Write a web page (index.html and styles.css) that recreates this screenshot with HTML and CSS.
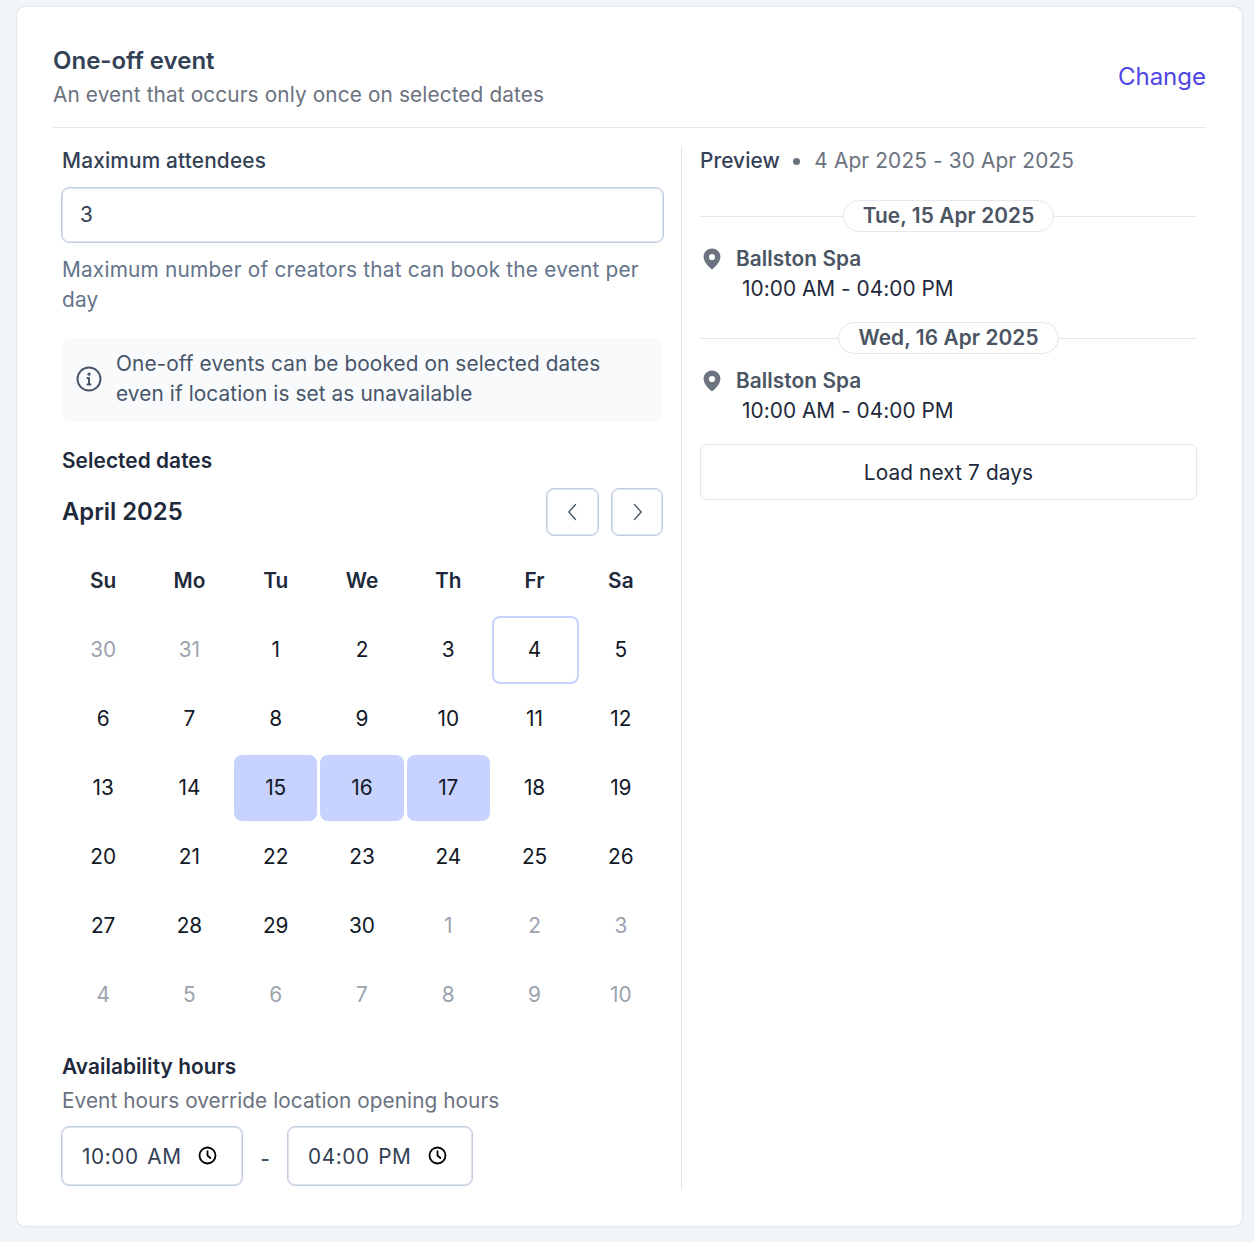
FILE: index.html
```html
<!DOCTYPE html>
<html lang="en">
<head>
<meta charset="utf-8">
<title>One-off event</title>
<link rel="stylesheet" href="styles.css">
</head>
<body>
<main class="card">
  <header class="head">
    <div>
      <h1 class="title">One-off event</h1>
      <p class="subtitle">An event that occurs only once on selected dates</p>
    </div>
    <a class="change">Change</a>
  </header>
  <div class="columns">
    <section class="left">
      <label class="label">Maximum attendees</label>
      <div class="input">3</div>
      <p class="hint">Maximum number of creators that can book the event per day</p>
      <div class="notice">
        <svg class="notice-icon" viewBox="0 0 24 24" fill="none" stroke="#475569" stroke-width="1.8" stroke-linecap="round"><circle cx="12" cy="12" r="10.6"/><path d="M12 11v6M10.6 11H12M10.6 17h2.8"/><circle cx="12" cy="7.6" r=".6" fill="#475569"/></svg>
        <p>One-off events can be booked on selected dates even if location is set as unavailable</p>
      </div>
      <h2 class="section-title">Selected dates</h2>
      <div class="month-row">
        <h3 class="month">April 2025</h3>
        <div class="nav">
          <button class="nav-btn nav-prev"><svg viewBox="0 0 24 24" fill="none" stroke="#475569" stroke-width="1.6" stroke-linecap="round" stroke-linejoin="round"><path d="M15 3l-8 9 8 9"/></svg></button>
          <button class="nav-btn nav-next"><svg viewBox="0 0 24 24" fill="none" stroke="#475569" stroke-width="1.6" stroke-linecap="round" stroke-linejoin="round"><path d="M9 3l8 9-8 9"/></svg></button>
        </div>
      </div>
      <div class="calendar">
        <div class="dow">Su</div><div class="dow">Mo</div><div class="dow">Tu</div><div class="dow">We</div><div class="dow">Th</div><div class="dow">Fr</div><div class="dow">Sa</div>
        <div class="day muted">30</div><div class="day muted">31</div><div class="day">1</div><div class="day">2</div><div class="day">3</div><div class="day today">4</div><div class="day">5</div>
        <div class="day">6</div><div class="day">7</div><div class="day">8</div><div class="day">9</div><div class="day">10</div><div class="day">11</div><div class="day">12</div>
        <div class="day">13</div><div class="day">14</div><div class="day sel">15</div><div class="day sel">16</div><div class="day sel">17</div><div class="day">18</div><div class="day">19</div>
        <div class="day">20</div><div class="day">21</div><div class="day">22</div><div class="day">23</div><div class="day">24</div><div class="day">25</div><div class="day">26</div>
        <div class="day">27</div><div class="day">28</div><div class="day">29</div><div class="day">30</div><div class="day muted">1</div><div class="day muted">2</div><div class="day muted">3</div>
        <div class="day muted">4</div><div class="day muted">5</div><div class="day muted">6</div><div class="day muted">7</div><div class="day muted">8</div><div class="day muted">9</div><div class="day muted">10</div>
      </div>
      <h2 class="section-title hours-title">Availability hours</h2>
      <p class="hours-sub">Event hours override location opening hours</p>
      <div class="times">
        <div class="time time-a"><span>10:00 AM</span><svg class="clock" viewBox="0 0 20 20" fill="none" stroke="#000" stroke-width="1.9" stroke-linecap="round" stroke-linejoin="round"><circle cx="10" cy="10" r="8.4"/><path d="M10 5.500V10l3 2.600"/></svg></div>
        <span class="dash">-</span>
        <div class="time time-b"><span>04:00 PM</span><svg class="clock" viewBox="0 0 20 20" fill="none" stroke="#000" stroke-width="1.9" stroke-linecap="round" stroke-linejoin="round"><circle cx="10" cy="10" r="8.4"/><path d="M10 5.500V10l3 2.600"/></svg></div>
      </div>
    </section>
    <aside class="right">
      <div class="preview-head"><span class="preview">Preview</span><i class="dot"></i><span class="range">4 Apr 2025 - 30 Apr 2025</span></div>
      <div class="date-sep date-first"><span>Tue, 15 Apr 2025</span></div>
      <div class="loc"><svg class="pin" viewBox="0 0 18 22"><path fill-rule="evenodd" fill="#6b7280" d="M9 .5C4.3.5.6 4.2.6 8.8c0 5 4.6 9.7 8.4 12.7 3.800-3 8.400-7.700 8.400-12.700C17.400 4.200 13.700.5 9 .5zm0 5.400a3.100 3.100 0 1 1 0 6.200 3.100 3.100 0 0 1 0-6.200z"/></svg><span>Ballston Spa</span></div>
      <div class="when">10:00 AM - 04:00 PM</div>
      <div class="date-sep"><span>Wed, 16 Apr 2025</span></div>
      <div class="loc"><svg class="pin" viewBox="0 0 18 22"><path fill-rule="evenodd" fill="#6b7280" d="M9 .5C4.3.5.6 4.2.6 8.8c0 5 4.6 9.7 8.4 12.7 3.800-3 8.400-7.700 8.400-12.700C17.400 4.200 13.700.5 9 .5zm0 5.400a3.100 3.100 0 1 1 0 6.200 3.100 3.100 0 0 1 0-6.200z"/></svg><span>Ballston Spa</span></div>
      <div class="when">10:00 AM - 04:00 PM</div>
      <button class="load">Load next 7 days</button>
    </aside>
  </div>
</main>
</body>
</html>
```
FILE: styles.css
```css
* { box-sizing: border-box; }
html, body { margin: 0; padding: 0; }
body {
  background: #f1f5f9;
  padding: 7px 12px 15px 17px;
  font-family: Inter, "Liberation Sans", sans-serif;
  color: #1e293b;
}
h1, h2, h3, p { margin: 0; }
.card {
  background: #fff;
  border-radius: 8px;
  box-shadow: 0 0 2px rgba(15, 23, 42, .22);
  padding: 36px 36px 36px;
  height: 1219px;
}
.head {
  display: flex;
  justify-content: space-between;
  align-items: center;
  height: 85px;
  padding-bottom: 15px;
  border-bottom: 1px solid #e5e7eb;
}
.title { font-size: 24px; line-height: 35px; font-weight: 600; color: #334155; margin-top: -2px; }
.subtitle { font-size: 20.8px; line-height: 31px; color: #6b7280; letter-spacing: .12px; margin-top: 1px; }
.change { font-size: 24px; line-height: 35px; color: #4f46e5; margin-bottom: 2px; }
.columns { display: flex; margin-top: 18px; height: 1044px; }
.left { width: 629px; padding: 0 18px 0 9px; border-right: 1px solid #e5e7eb; }
.right { flex: 1; padding-left: 18px; padding-right: 9px; }
.label { display: block; font-size: 20.8px; line-height: 30px; font-weight: 500; color: #334155; letter-spacing: .18px; }
.input {
  margin: 11px -1px 0;
  height: 56px;
  border: 1px solid #c2cddd;
  box-shadow: inset 0 0 0 1px #dde4ee;
  border-radius: 8px;
  padding: 0 18px 2px;
  display: flex;
  align-items: center;
  font-size: 20.8px;
  color: #334155;
}
.hint { margin-top: 12px; font-size: 20.8px; line-height: 30px; color: #64748b; letter-spacing: .2px; }
.notice {
  margin-top: 23px;
  display: flex;
  align-items: center;
  gap: 14px;
  background: #f8fafc;
  border-radius: 10px;
  padding: 11px 50px 13px 14px;
  height: 84px;
  font-size: 20.8px;
  line-height: 30px;
  color: #475569;
  letter-spacing: .1px;
}
.notice-icon { width: 26px; height: 26px; flex: none; }
.section-title { font-size: 20.8px; line-height: 31px; font-weight: 600; color: #1e293b; letter-spacing: .08px; }
.notice + .section-title { margin-top: 23px; }
.month-row { display: flex; justify-content: space-between; align-items: center; margin-top: 12px; }
.month { font-size: 23.8px; line-height: 48px; font-weight: 600; color: #1e293b; }
.nav { display: flex; gap: 12px; }
.nav-btn {
  height: 48px;
  border: 1px solid #c2cddd;
  box-shadow: inset 0 0 0 1px #dde4ee;
  border-radius: 8px;
  background: #fff;
  padding: 0;
  display: flex;
  align-items: center;
  justify-content: center;
}
.nav-prev { width: 53px; }
.nav-next { width: 52px; }
.nav-btn svg { width: 20px; height: 20px; }
.calendar {
  display: grid;
  grid-template-columns: repeat(7, 1fr);
  grid-auto-rows: 69px;
  margin: 10px -1px 0 -2px;
}
.dow {
  display: flex;
  align-items: center;
  justify-content: center;
  font-size: 20.8px;
  font-weight: 600;
  color: #1e293b;
}
.day {
  display: flex;
  align-items: center;
  justify-content: center;
  margin: 1px 0 2px;
  font-size: 20.8px;
  color: #111827;
  border-radius: 8px;
}
.day.muted { color: #9ca3af; }
.today { border: 2px solid #c7d2fe; margin: 1px -1px 0 1px; padding: 0 2px 2px 0; }
.sel { background: #c7d2fe; margin: 2px 1.5px 1px; padding-bottom: 2px; }
.hours-title { margin-top: 22px; }
.hours-sub { margin-top: 3px; font-size: 20.8px; line-height: 31px; color: #6b7280; letter-spacing: .05px; }
.times { display: flex; align-items: center; margin: 10px 0 0 -1px; }
.time {
  height: 60px;
  border: 1px solid #c2cddd;
  box-shadow: inset 0 0 0 1px #dde4ee;
  border-radius: 8px;
  display: flex;
  align-items: center;
  justify-content: space-between;
  padding: 0 25px 0 20px;
  font-size: 20.8px;
  color: #334155;
  word-spacing: 2px;
  letter-spacing: .6px;
}
.time-a { width: 182px; }
.time-b { width: 186px; }
.clock { width: 19px; height: 19px; flex: none; margin-top: -2px; }
.dash { width: 44px; text-align: center; font-size: 20.8px; font-weight: 500; color: #475569; padding-top: 4px; }
.preview-head { display: flex; align-items: center; font-size: 20.8px; line-height: 30px; }
.preview { font-weight: 500; color: #334155; letter-spacing: .1px; }
.dot { width: 7px; height: 7px; border-radius: 50%; background: #6b7280; margin: 0 14px 0 13.500px; }
.range { color: #6b7280; letter-spacing: .15px; }
.date-sep {
  display: flex;
  align-items: center;
  justify-content: center;
  height: 32px;
  margin-top: 24px;
  background: linear-gradient(#e5e7eb, #e5e7eb) center / 100% 1px no-repeat;
}
.date-first { margin-top: 24px; }
.date-sep span {
  background: #fff;
  border: 1px solid #e5e7eb;
  border-radius: 16px;
  padding: 0 19px;
  height: 32px;
  font-size: 20.8px;
  line-height: 30px;
  font-weight: 600;
  color: #4b5563;
  letter-spacing: .1px;
}
.loc {
  display: flex;
  align-items: center;
  gap: 15px;
  margin-top: 12px;
  padding-left: 3px;
  font-size: 20.8px;
  line-height: 30px;
  font-weight: 600;
  color: #4b5563;
  letter-spacing: .08px;
}
.pin { width: 18px; height: 22px; flex: none; }
.when { padding-left: 42px; font-size: 20.8px; line-height: 30px; color: #1e293b; letter-spacing: .05px; }
.when + .date-sep { margin-top: 18px; }
.load {
  display: block;
  width: 100%;
  height: 56px;
  margin-top: 18px;
  background: #fff;
  border: 1px solid #e5e7eb;
  border-radius: 6px;
  font: inherit;
  font-size: 20.8px;
  color: #1e293b;
  letter-spacing: .12px;
}
```
